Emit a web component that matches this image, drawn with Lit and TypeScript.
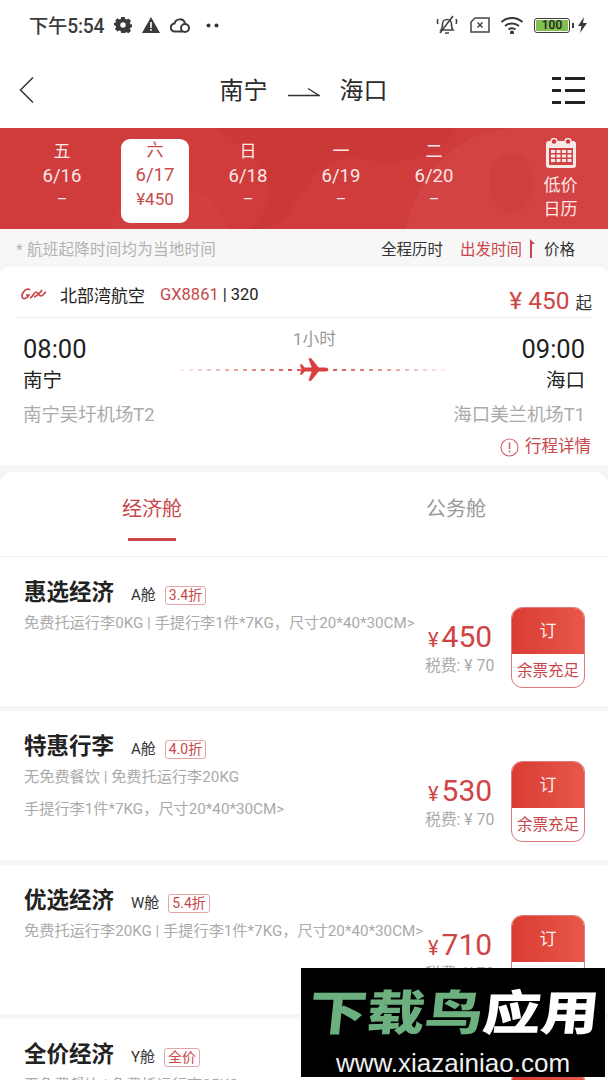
import { LitElement, html, css, svg } from "lit";
import { customElement } from "lit/decorators.js";

const days = [
  { w: "五", d: "6/16", p: "–" },
  { w: "六", d: "6/17", p: "¥450", on: true },
  { w: "日", d: "6/18", p: "–" },
  { w: "一", d: "6/19", p: "–" },
  { w: "二", d: "6/20", p: "–" },
];

const fares = [
  { t: "惠选经济", c: "A舱", b: "3.4折", lines: ["免费托运行李0KG | 手提行李1件*7KG，尺寸20*40*30CM>"], p: "450" },
  { t: "特惠行李", c: "A舱", b: "4.0折", lines: ["无免费餐饮 | 免费托运行李20KG", "手提行李1件*7KG，尺寸20*40*30CM>"], p: "530" },
  { t: "优选经济", c: "W舱", b: "5.4折", lines: ["免费托运行李20KG | 手提行李1件*7KG，尺寸20*40*30CM>"], p: "710" },
  { t: "全价经济", c: "Y舱", b: "全价", lines: ["无免费餐饮 | 免费托运行李25KG"], p: "1310" },
];

const gear = svg`<path fill="#3a3a3a" fill-rule="evenodd" d="M7 0h4l.5 2.300 1.600.7 2-1.300 2.800 2.800-1.300 2 .7 1.600 2.300.5v2.800l-2.300.5-.7 1.600 1.300 2-2.800 2.800-2-1.300-1.600.7L11 18H7l-.5-2.300-1.600-.7-2 1.300L.1 13.500l1.300-2-.7-1.600L-1 9.400V6.600l1.700-.2.700-1.600-1.300-.4L2.900 1.600l2 1.300 1.600-.7zM9 6a3 3 0 1 0 0 6 3 3 0 0 0 0-6z"/>`;

@customElement("app-root")
export class AppRoot extends LitElement {
  static styles = css`
    :host {
      display: block;
      position: relative;
      width: 608px;
      height: 1080px;
      overflow: hidden;
      background: #f6f6f6;
      font-family: Roboto, "Noto Sans CJK SC", sans-serif;
      color: #222;
    }
    * { box-sizing: border-box; }
    .status {
      height: 52px;
      background: #fff;
      display: flex;
      align-items: center;
      padding: 0 20px 2px 29px;
      color: #3c3c3c;
    }
    .clock { font-size: 19.300px; font-weight: 500; letter-spacing: -0.2px; white-space: nowrap; }
    .st-left { display: flex; align-items: center; gap: 10px; flex: 1; }
    .st-right { display: flex; align-items: center; gap: 10px; }
    .st-left svg, .st-right svg { display: block; flex: none; }
    .dots { margin-left: 5px; }
    .sim { margin-left: 2px; }
    .batt {
      width: 36px; height: 15px;
      border: 1.500px solid #3c3c3c;
      border-radius: 3px;
      padding: 1px;
    }
    .batt span {
      display: block; height: 100%;
      background: #7fc04f;
      border-radius: 1px;
      font-size: 12px; line-height: 10px;
      text-align: center;
      color: #222;
      font-weight: 500;
    }
    .batt-wrap { display: flex; align-items: center; gap: 4px; }
    .nub { width: 2px; height: 5px; background: #3c3c3c; margin-left: -2px; }
    .bolt { margin-left: -1px; }
    .header {
      height: 76px;
      background: #fff;
      display: flex;
      align-items: center;
      padding: 0 23px 0 19px;
      justify-content: space-between;
    }
    .route {
      display: flex; align-items: center; gap: 20px;
      font-size: 24px; color: #2a2a2a;
      line-height: 38px;
      margin: 2px 0 0 21px;
      white-space: nowrap;
    }
    .route svg { margin-top: 1px; }
    .strip {
      height: 101px;
      background: #d03c3c;
      position: relative;
      display: flex;
      padding-left: 15.500px;
      overflow: hidden;
    }
    .strip-bg { position: absolute; inset: 0; }
    .day {
      position: relative;
      width: 93px;
      display: flex; flex-direction: column; align-items: center;
      padding-top: 11px;
      color: #f9e8e8;
      font-size: 18.500px;
      line-height: 24px;
    }
    .day .w { font-size: 17px; }
    .day .d { margin-top: 1px; }
    .day .pr { font-size: 16px; }
    .day.on::before {
      content: "";
      position: absolute;
      left: 12.500px; top: 11px; width: 68px; height: 84px;
      background: #fff;
      border-radius: 9px;
    }
    .day > span { position: relative; }
    .day.on { color: #c84a4a; padding-top: 10px; }
    .day.on .pr { font-size: 17px; }
    .cal {
      position: relative;
      margin-left: 55px;
      width: 50px;
      display: flex; flex-direction: column; align-items: center;
      padding-top: 10px;
      color: #f9e8e8;
      font-size: 17px;
      line-height: 23.500px;
    }
    .cal svg { display: block; margin-bottom: 6px; }
    .cal span { white-space: nowrap; }
    .hint {
      height: 38px;
      background: #f7f7f7;
      display: flex; align-items: center;
      padding: 0 33px 0 16px;
      font-size: 15.500px;
      color: #333;
    }
    .hint .note { color: #b2b2b2; flex: 1; white-space: nowrap; letter-spacing: 0.25px; }
    .hint .sort { margin-left: 18px; white-space: nowrap; }
    .hint .act { color: #c9474a; display: flex; align-items: center; gap: 6px; margin-left: 17px; }
    .hint .act svg { display: block; }
    .hint .price-s { margin-left: 9px; }
    .flight { height: 198px; background: #fff; position: relative; border-radius: 8px 8px 0 0; }
    .f-top {
      height: 51px;
      margin: 0 16px;
      border-bottom: 1px solid #eee;
      display: flex; align-items: center;
      font-size: 17px;
      padding-top: 4px;
    }
    .f-top svg { display: block; margin: 0 13px 0 5px; }
    .f-top .no { color: #c9474a; margin-left: 15px; font-size: 16.500px; }
    .f-top .ty { margin-left: 4px; font-size: 16.500px; }
    .f-top .total { margin-left: auto; color: #333; display: flex; align-items: baseline; margin-top: 12px; }
    .total b { font-weight: 400; color: #cf4444; font-size: 24.500px; white-space: pre; }
    .total span { font-size: 16.500px; margin-left: 6px; }
    .f-main { display: flex; padding: 15px 23px 0; position: relative; justify-content: space-between; }
    .end { display: flex; flex-direction: column; }
    .end.r { align-items: flex-end; }
    .end .tm { font-size: 25.500px; line-height: 32px; color: #1f1f1f; }
    .end .ct { font-size: 19.500px; line-height: 31px; color: #222; }
    .end .ap { font-size: 18.400px; line-height: 37px; color: #aaa; white-space: nowrap; }
    .mid {
      position: absolute; left: 180px; top: 9px; width: 266px;
      display: flex; flex-direction: column; align-items: center;
    }
    .mid .dur { font-size: 16.800px; color: #999; line-height: 25px; margin-left: 3px; }
    .line-wrap { position: relative; width: 100%; height: 30px; margin-top: 3px; }
    .dash {
      position: absolute; left: 0; right: 0; top: 14px;
      height: 1.500px;
      background: repeating-linear-gradient(90deg, #d9585c 0 4px, transparent 4px 9px);
      -webkit-mask-image: linear-gradient(90deg, rgba(0,0,0,.12), #000 42%, #000 58%, rgba(0,0,0,.12));
      mask-image: linear-gradient(90deg, rgba(0,0,0,.12), #000 42%, #000 58%, rgba(0,0,0,.12));
    }
    .line-wrap svg { position: absolute; left: 120px; top: 2px; }
    .detail {
      position: absolute; right: 17px; top: 168px;
      display: flex; align-items: center; gap: 6px;
      color: #c9474a; font-size: 16.500px; line-height: 24px;
    }
    .detail svg { display: block; }
    .tabs-gap { height: 7px; }
    .tabs {
      height: 85px;
      background: #fff;
      border-radius: 14px 14px 0 0;
      border-bottom: 1px solid #eee;
      display: grid;
      grid-template-columns: 1fr 1fr;
    }
    .tab {
      position: relative;
      text-align: center;
      font-size: 20px;
      line-height: 75px;
      color: #999;
    }
    .tab.on { color: #c9474a; }
    .tab.on::after {
      content: "";
      position: absolute;
      left: 128px; width: 48px; bottom: 15px; height: 3px;
      background: #c9474a;
    }
    .fare {
      height: 149px;
      background: #fff;
      margin-bottom: 5px;
      display: flex;
      padding: 0 24px;
      position: relative;
    }
    .f-left { flex: 1; min-width: 0; padding-top: 16px; }
    .f-title { display: flex; align-items: center; height: 34px; white-space: nowrap; }
    .f-title .n { font-size: 22.500px; font-weight: 700; color: #222; }
    .f-title .c { font-size: 15px; margin: 6px 0 0 17px; color: #333; }
    .f-title .b {
      margin: 11px 0 0 9px;
      font-size: 14px;
      line-height: 17px;
      color: #c9474a;
      border: 1px solid #e3a5a5;
      border-radius: 3px;
      padding: 0 3px;
    }
    .f-line { font-size: 15.200px; color: #aaa; line-height: 32px; white-space: nowrap; }
    .f-line:first-of-type { margin-top: -1px; }
    .f-right {
      position: absolute; left: 425px; top: 50px;
      display: flex;
    }
    .f-price { width: 86px; display: flex; flex-direction: column; padding-top: 14px; }
    .f-price .amt { color: #cf4444; display: flex; align-items: baseline; font-size: 30px; line-height: 32px; padding-left: 3px; }
    .f-price .amt i { font-style: normal; font-size: 20px; margin-right: 3px; }
    .f-price .tax { color: #aaa; font-size: 15.800px; line-height: 26px; white-space: nowrap; margin-top: -3px; }
    .btn {
      width: 74px; height: 81px;
      border-radius: 11px;
      border: 1px solid #dc7c7c;
      background: #fff;
      overflow: hidden;
      flex: none;
    }
    .btn .top {
      height: 47px;
      margin: -1px -1px 0;
      background: linear-gradient(90deg, #d93c32, #e8584a);
      color: #fdeeee;
      font-size: 17px;
      text-align: center;
      line-height: 48px;
    }
    .btn .bot {
      font-size: 15.500px;
      color: #c9474a;
      text-align: center;
      line-height: 34px;
      white-space: nowrap;
    }
    .mark {
      position: absolute;
      left: 301px; top: 968px; width: 304px; height: 109px;
      background: #000;
      overflow: hidden;
    }
    .mark .big {
      position: absolute; left: 8px; top: 10px;
      font-size: 58px; line-height: 72px;
      font-weight: 900;
      white-space: nowrap;
      transform: skewX(-6deg) scaleY(0.82);
      color: #6db07f;
    }
    .mark .big em { font-style: normal; color: #fff; }
    .mark .url {
      position: absolute; left: 0; right: 0; top: 81px;
      text-align: center;
      font-family: "Liberation Sans", sans-serif;
      font-size: 26px;
      line-height: 28px;
      color: #f0f0f0;
    }
  `;

  render() {
    return html`
      <div class="status">
        <div class="st-left">
          <span class="clock">下午5:54</span>
          <svg width="18" height="18" viewBox="-1 -1 20 20">${gear}</svg>
          <svg width="18" height="16" viewBox="0 0 18 16"><path fill="#3a3a3a" d="M9 0 18 16H0z"/><path fill="#fff" d="M8.200 5h1.600v6H8.200zM8.200 12h1.600v1.800H8.200z"/></svg>
          <svg width="21" height="15" viewBox="0 0 21 15" fill="none" stroke="#3a3a3a" stroke-width="2"><path d="M13 13.500H5a4 4 0 0 1-.5-8A5.500 5.500 0 0 1 15 5"/><circle cx="15" cy="10" r="4"/></svg>
          <svg class="dots" width="13" height="5" viewBox="0 0 13 5"><circle cx="2.500" cy="2.500" r="2" fill="#333"/><circle cx="10.500" cy="2.500" r="2" fill="#333"/></svg>
        </div>
        <div class="st-right">
          <svg width="22" height="20" viewBox="0 0 22 20" fill="none" stroke="#444" stroke-width="1.600"><path d="M5 15c1.500-1.500 1.500-3 1.500-6a4.500 4.500 0 0 1 9 0c0 3 0 4.500 1.500 6zM9 18h4"/><path d="M17 1 4 18"/><path d="M2 4c-1 2-1 3 0 5M20 4c1 2 1 3 0 5"/></svg>
          <svg class="sim" width="20" height="16" viewBox="0 0 20 16" fill="none" stroke="#444" stroke-width="1.500"><path d="M5 1h14v14H1V5zM7.500 5.500l5 5M12.500 5.500l-5 5"/></svg>
          <svg width="24" height="18" viewBox="0 0 24 18" fill="none" stroke="#3a3a3a" stroke-width="2"><path d="M1.500 6c6-5.500 15-5.500 21 0M5 10c4-3.500 10-3.500 14 0M8.500 13.500c2-1.500 5-1.500 7 0"/><circle cx="12" cy="16.500" r="1" fill="#3a3a3a"/></svg>
          <div class="batt-wrap">
            <div class="batt"><span>100</span></div>
            <div class="nub"></div>
            <svg class="bolt" width="11" height="16" viewBox="0 0 11 16"><path fill="#3a3a3a" d="M7 0 1 9h3.500L3 16l7-10H6z"/></svg>
          </div>
        </div>
      </div>

      <div class="header">
        <svg width="15" height="28" viewBox="0 0 15 28" fill="none" stroke="#333" stroke-width="1.500"><path d="M14 1.500 1.500 14 14 26.500"/></svg>
        <div class="route">
          <span>南宁</span>
          <svg width="32" height="10" viewBox="0 0 32 10" fill="none" stroke="#333" stroke-width="1.300"><path d="M0 8.500h31L20 1.500"/></svg>
          <span>海口</span>
        </div>
        <svg width="33" height="30" viewBox="0 0 33 30" fill="#222"><path d="M0 2h9v3H0zM13 2h20v3H13zM0 14h9v3H0zM13 14h20v3H13zM0 26h9v3H0zM13 26h20v3H13z"/></svg>
      </div>

      <div class="strip">
        <svg class="strip-bg" width="608" height="101" viewBox="0 0 608 101">
          <path fill="#c43535" opacity=".55" d="M215 0h240c-10 30-60 40-100 30-30-6-50 30-70 60-10 10-20 11-30 11h-5c30-30 30-60-35-101z"/>
          <path fill="#d64848" d="M405 101c10-40 40-100 110-101h93v101z" opacity=".55"/>
          <ellipse cx="511" cy="55" rx="22" ry="30" fill="#cc3d3d" opacity=".6"/>
          <path fill="#d54646" d="M110 101c10-40 60-60 100-30l20 30z" opacity=".35"/>
        </svg>
        ${days.map(
          (d) => html`<div class="day ${d.on ? "on" : ""}">
            <span class="w">${d.w}</span>
            <span class="d">${d.d}</span>
            <span class="pr">${d.p}</span>
          </div>`
        )}
        <div class="cal">
          <svg width="30" height="30" viewBox="0 0 30 30" fill="#f9e8e8">
            <path fill-rule="evenodd" d="M3 3h24a3 3 0 0 1 3 3v21a3 3 0 0 1-3 3H3a3 3 0 0 1-3-3V6a3 3 0 0 1 3-3zM3 10v17h24V10z"/>
            <circle cx="8" cy="3.500" r="3" fill="#d03c3c" stroke="#f9e8e8" stroke-width="1.500"/>
            <circle cx="22" cy="3.500" r="3" fill="#d03c3c" stroke="#f9e8e8" stroke-width="1.500"/>
            <path d="M5 12h4v3H5zM10.500 12h4v3h-4zM16 12h4v3h-4zM21.500 12h4v3h-4zM5 16.500h4v3H5zM10.500 16.500h4v3h-4zM16 16.500h4v3h-4zM21.500 16.500h4v3h-4zM5 21h4v3H5zM10.500 21h4v3h-4zM16 21h4v3h-4zM21.500 21h4v3h-4z"/>
          </svg>
          <span>低价</span>
          <span>日历</span>
        </div>
      </div>

      <div class="hint">
        <span class="note">* 航班起降时间均为当地时间</span>
        <span class="sort">全程历时</span>
        <span class="sort act">出发时间
          <svg width="7" height="20" viewBox="0 0 7 20" fill="#c9474a"><path d="M2 20V1l5 5-3 0v14z"/></svg>
        </span>
        <span class="sort price-s">价格</span>
      </div>

      <div class="flight">
        <div class="f-top">
          <svg width="26" height="14" viewBox="0 0 26 14" fill="none" stroke="#c9474a" stroke-width="1.700">
            <path d="M9 3C6 0 1 5 1 9c0 4 5 3 7-1H5"/>
            <path d="M9 11c3-1 4-6 6-6s3 4 5 4 3-3 5-4M13 10c3-1 6-4 8-7" />
          </svg>
          <span>北部湾航空</span>
          <span class="no">GX8861</span>
          <span class="ty">| 320</span>
          <span class="total"><b>¥ 450</b><span>起</span></span>
        </div>
        <div class="f-main">
          <div class="end">
            <span class="tm">08:00</span>
            <span class="ct">南宁</span>
            <span class="ap">南宁吴圩机场T2</span>
          </div>
          <div class="mid">
            <span class="dur">1小时</span>
            <div class="line-wrap">
              <div class="dash"></div>
              <svg width="29" height="25" viewBox="0 0 31 26"><path fill="#d8403f" d="M30.500 13c0-1.200-2-2.200-4-2.200h-6.500L12 1h-3l3.500 9.800H5L2 7.500H0l1.500 5.500L0 18.500h2l3-3.300h7.500L9 25h3l8-9.800h6.500c2 0 4-1 4-2.200z"/></svg>
            </div>
          </div>
          <div class="end r">
            <span class="tm">09:00</span>
            <span class="ct">海口</span>
            <span class="ap">海口美兰机场T1</span>
          </div>
        </div>
        <div class="detail">
          <svg width="19" height="19" viewBox="0 0 19 19" fill="none" stroke="#d66a6a" stroke-width="1.200"><circle cx="9.500" cy="9.500" r="8.500"/><path d="M9.500 4.500v6.500M9.500 12.500v2" stroke-width="1.600"/></svg>
          <span>行程详情</span>
        </div>
      </div>

      <div class="tabs-gap"></div>
      <div class="tabs">
        <div class="tab on">经济舱</div>
        <div class="tab">公务舱</div>
      </div>

      ${fares.map(
        (f) => html`<div class="fare">
          <div class="f-left">
            <div class="f-title">
              <span class="n">${f.t}</span>
              <span class="c">${f.c}</span>
              <span class="b">${f.b}</span>
            </div>
            ${f.lines.map((l) => html`<div class="f-line">${l}</div>`)}
          </div>
          <div class="f-right">
            <div class="f-price">
              <div class="amt"><i>¥</i>${f.p}</div>
              <div class="tax">税费: ¥ 70</div>
            </div>
            <div class="btn">
              <div class="top">订</div>
              <div class="bot">余票充足</div>
            </div>
          </div>
        </div>`
      )}

      <div class="mark">
        <div class="big">下载鸟<em>应用</em></div>
        <div class="url">www.xiazainiao.com</div>
      </div>
    `;
  }
}
